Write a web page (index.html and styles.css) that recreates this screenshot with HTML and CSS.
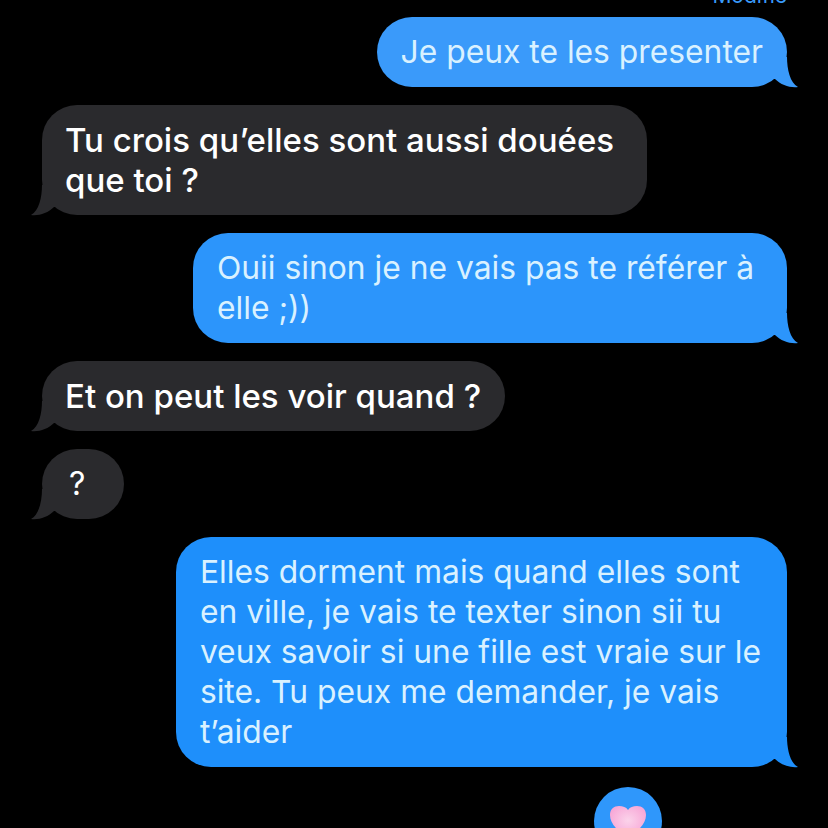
FILE: index.html
```html
<!DOCTYPE html>
<html lang="en">
<head>
    <meta charset="UTF-8">
    <meta name="viewport" content="width=device-width, initial-scale=1.0">
    <title>Messages</title>
    <link rel="stylesheet" href="styles.css">
</head>
<body>
    <div class="thread">
        <div class="edited">Modifié</div>

        <div class="bubble sent tone-1">
            Je peux te les presenter
            <svg class="tail" viewBox="0 0 30 30"><path d="M19 0C19 12 22 26 30 30C22 31 13 28 7 22L0 22L0 0Z"/></svg>
        </div>

        <div class="bubble received wrap-a">
            Tu crois qu’elles sont aussi douées<br>que toi ?
            <svg class="tail" viewBox="0 0 30 30"><path d="M11 0C11 12 8 26 0 30C8 31 17 28 23 22L30 22L30 0Z"/></svg>
        </div>

        <div class="bubble sent tone-2 wrap-a">
            Ouii sinon je ne vais pas te référer à<br>elle ;))
            <svg class="tail" viewBox="0 0 30 30"><path d="M19 0C19 12 22 26 30 30C22 31 13 28 7 22L0 22L0 0Z"/></svg>
        </div>

        <div class="bubble received">
            Et on peut les voir quand ?
            <svg class="tail" viewBox="0 0 30 30"><path d="M11 0C11 12 8 26 0 30C8 31 17 28 23 22L30 22L30 0Z"/></svg>
        </div>

        <div class="bubble received plain">
            ?
            <svg class="tail" viewBox="0 0 30 30"><path d="M11 0C11 12 8 26 0 30C8 31 17 28 23 22L30 22L30 0Z"/></svg>
        </div>

        <div class="bubble sent tone-3 wrap-b">
            Elles dorment mais quand elles sont<br>en ville, je vais te texter sinon sii tu<br>veux savoir si une fille est vraie sur le<br>site. Tu peux me demander, je vais<br>t’aider
            <svg class="tail" viewBox="0 0 30 30"><path d="M19 0C19 12 22 26 30 30C22 31 13 28 7 22L0 22L0 0Z"/></svg>
        </div>

        <div class="reaction">
            <svg class="heart" viewBox="0 0 36 32">
                <defs>
                    <radialGradient id="heartFill" cx="50%" cy="45%" r="65%">
                        <stop offset="0%" stop-color="#fbd3ea"/>
                        <stop offset="100%" stop-color="#f79fd3"/>
                    </radialGradient>
                </defs>
                <path fill="url(#heartFill)" d="M18 32C8 25 0 18 0 9C0 3 4 0 9 0C13 0 16 1 18 4C20 1 23 0 27 0C32 0 36 3 36 9C36 18 28 25 18 32Z"/>
            </svg>
        </div>
    </div>
</body>
</html>
```

FILE: styles.css
```css
html, body {
    margin: 0;
    padding: 0;
    height: 100%;
    background: #000;
    overflow: hidden;
}

.thread {
    display: flex;
    flex-direction: column;
    align-items: flex-start;
    gap: 18px;
    padding: 0 41px 0 42px;
    margin-top: -13px;
    font-family: "Inter", "Liberation Sans", sans-serif;
    font-size: 31.8px;
    line-height: 40px;
}

.edited {
    align-self: flex-end;
    height: 18px;
    line-height: 18px;
    margin-bottom: -6px;
    font-size: 21px;
    color: #3a9bfb;
    overflow: hidden;
}

.bubble {
    position: relative;
    box-sizing: border-box;
    padding: 15px 24px;
    border-radius: 35px;
    white-space: nowrap;
}

.wrap-a {
    padding-right: 33px;
}

.wrap-b {
    padding-right: 26px;
}

.tail {
    position: absolute;
    bottom: 0;
    width: 30px;
    height: 30px;
    overflow: visible;
}

.sent {
    align-self: flex-end;
    color: #d9f1ff;
}

.sent .tail {
    right: -11px;
}

.tone-1 {
    background: #3a9afa;
}

.tone-1 .tail {
    fill: #3a9afa;
}

.tone-2 {
    background: #2c95fb;
}

.tone-2 .tail {
    fill: #2c95fb;
}

.tone-3 {
    background: #1e8ffb;
}

.tone-3 .tail {
    fill: #1e8ffb;
}

.received {
    padding-left: 23px;
    background: #2a2a2d;
    color: #fff;
    font-weight: 500;
    font-size: 33px;
}

.received .tail {
    left: -11px;
    fill: #2a2a2d;
}

.plain {
    width: 82px;
    padding-left: 27px;
    padding-right: 0;
    font-weight: 400;
    font-size: 32px;
}

.reaction {
    display: flex;
    justify-content: center;
    align-items: flex-start;
    box-sizing: border-box;
    width: 68px;
    height: 68px;
    margin: 2px 0 0 552px;
    padding-top: 19px;
    border-radius: 50%;
    background: #2f97fb;
}

.heart {
    width: 36px;
    height: 32px;
}
```
